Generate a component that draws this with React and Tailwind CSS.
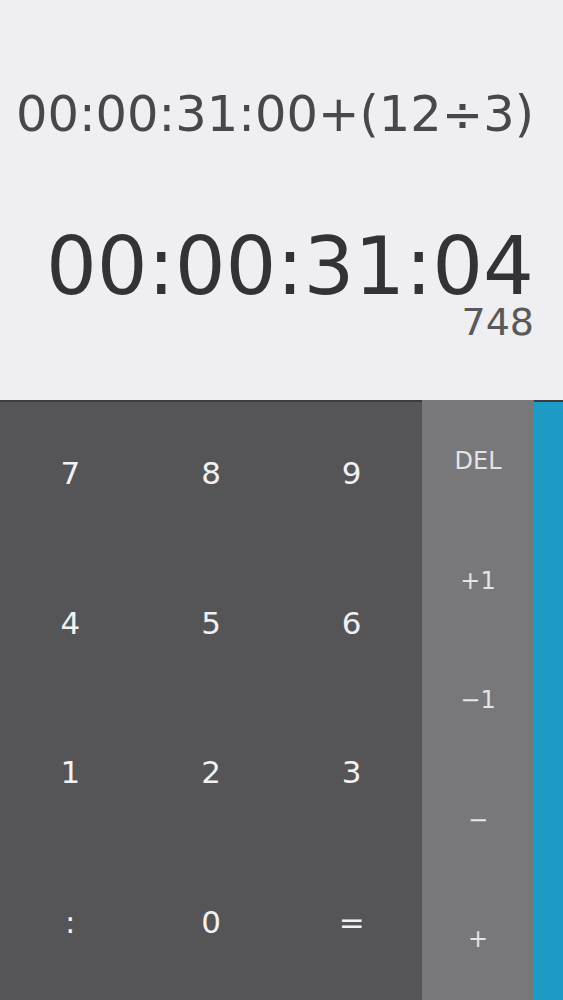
const font = { fontFamily: '"DejaVu Sans", "Liberation Sans", sans-serif' };

const digits = [
  ["7", "8", "9"],
  ["4", "5", "6"],
  ["1", "2", "3"],
  [":", "0", "="],
];

const ops = ["DEL", "+1", "\u22121", "\u2212", "+"];

export default function App() {
  return (
    <div className="w-[563px] h-[1000px] flex flex-col overflow-hidden" style={font}>
      {/* Display */}
      <div className="h-[400px] bg-[#efeef1] flex flex-col items-end pr-[29px] pt-[90px]">
        <div className="text-[49.5px] leading-none text-[#48474a] whitespace-nowrap">
          00:00:31:00+(12÷3)
        </div>
        <div className="mt-[93px] text-[80px] leading-[68px] text-[#333235] whitespace-nowrap">
          00:00:31:04
        </div>
        <div className="mt-[6px] text-[38px] leading-[30px] text-[#59585b]">748</div>
      </div>

      {/* Keypad */}
      <div className="flex flex-1 border-t-2 border-[#3c3b3e]">
        <div className="w-[422px] bg-[#555457] grid grid-cols-3 grid-rows-4">
          {digits.flat().map((d) => (
            <button
              key={d}
              className="flex items-center justify-center text-[31px] text-[#f1f0f2] pb-[7px]"
            >
              {d}
            </button>
          ))}
        </div>
        <div className="w-[112px] bg-[#78777a] grid grid-rows-5 -mt-[2px] pt-[2px]">
          {ops.map((o) => (
            <button
              key={o}
              className="flex items-start justify-center pt-[41px] text-[24px] text-[#e4e3e6]"
            >
              {o}
            </button>
          ))}
        </div>
        <div className="flex-1 bg-[#1e9bc5]" />
      </div>
    </div>
  );
}
